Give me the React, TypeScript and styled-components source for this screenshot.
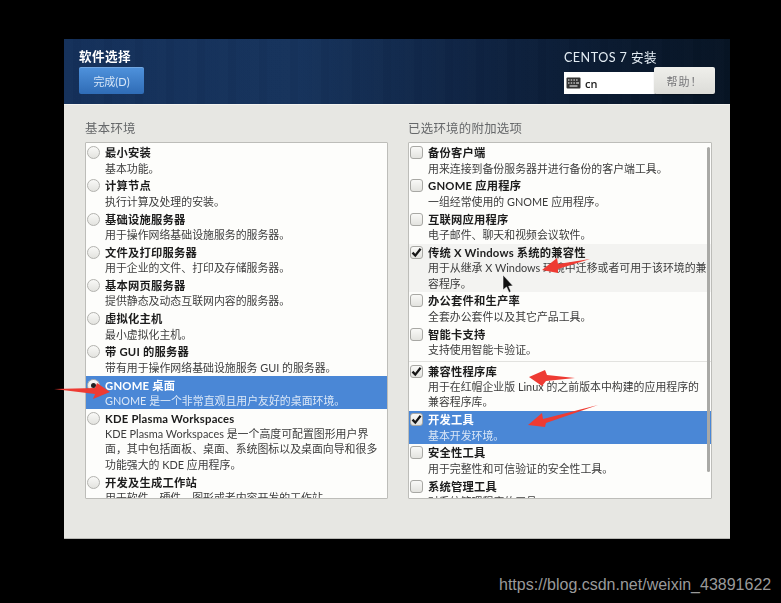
import React from "react";
import styled, { createGlobalStyle } from "styled-components";

const FONT = `Lato, "Noto Sans CJK SC", sans-serif`;
const Global = createGlobalStyle`
  html, body { margin: 0; padding: 0; background: #000; }
  body { width: 781px; height: 603px; overflow: hidden; font-family: ${FONT}; }
`;
const Page = styled.div`
  position: relative; width: 781px; height: 603px; background: #000; padding: 39px 51px 0 64px; box-sizing: border-box; overflow: hidden;
`;
const Soft = styled.div`filter: blur(0.45px);`;
const Win = styled.div`
  width: 666px; height: 500px; background: #e7e7e3; display: flex; flex-direction: column; border-bottom: 1px solid #b9b9b5; box-sizing: border-box;
`;
const Header = styled.header`
  height: 66px; flex: none; box-sizing: border-box; padding: 10px 15px 0 15px; display: flex; justify-content: space-between;
  color: #fff; border-bottom: 1px solid #f3f3f0;
  background:
    repeating-linear-gradient(90deg, rgba(255,255,255,.008) 0 9px, rgba(0,0,0,.018) 9px 17px, rgba(255,255,255,.004) 17px 31px),
    linear-gradient(90deg, #14305a 0%, #16335c 35%, #0f2444 60%, #0a1a30 82%, #071424 100%);
`;
const HLeft = styled.div`display: flex; flex-direction: column; gap: 2px;`;
const HRight = styled.div`display: flex; flex-direction: column; width: 151px;`;
const Title = styled.h1`margin: 0; font-size: 12.6px; line-height: 16px; font-weight: 700; letter-spacing: .4px;`;
const Done = styled.button`
  width: 65px; height: 27px; border: 0; padding: 0; border-radius: 2px; color: #d6e6f8; font: 400 11px ${FONT};
  background: linear-gradient(#4f92dc, #2f6cb6); box-shadow: inset 0 1px 0 rgba(255,255,255,.2);
`;
const Product = styled.div`font-size: 12.6px; line-height: 16px; color: #e4edf4; letter-spacing: .45px; margin-top: 1px;`;
const Controls = styled.div`display: flex; align-items: flex-end; height: 27px; margin-top: 1px;`;
const Kbd = styled.div`
  width: 91px; height: 22px; background: #fff; color: #222; display: flex; align-items: center; gap: 4px; padding-left: 2px; box-sizing: border-box; font: 600 11px "Open Sans", sans-serif;
`;
const Help = styled.button`
  width: 61px; height: 27px; margin-left: -1px; border: 0; border-radius: 2px; padding: 0; color: #77777a; letter-spacing: 1px;
  font: 400 11px ${FONT}; background: linear-gradient(#efefeb, #dcdcd8); box-shadow: 0 1px 1px rgba(0,0,0,.3);
`;
const Body = styled.main`display: grid; grid-template-columns: 303px 304px; column-gap: 20px; padding: 15px 0 0 21px;`;
const Col = styled.section`display: flex; flex-direction: column;`;
const Label = styled.h2`margin: 0 0 5px; font-size: 12.4px; line-height: 17px; font-weight: 400; color: #66686a; letter-spacing: .3px;`;
const List = styled.div`
  position: relative; height: 357px; box-sizing: border-box; background: #fdfdfb; border: 1px solid #bdbdb9; border-radius: 1px; overflow: hidden; padding-top: 1px;
`;
const Row = styled.div<{ $sel?: boolean; $hover?: boolean; $sep?: boolean }>`
  display: grid; grid-template-columns: 19px 1fr; padding: 1.3px 0 1.2px 0;
  background: ${(p) => (p.$sel ? "#4a87d6" : p.$hover ? "#f3f3f1" : "transparent")};
  color: ${(p) => (p.$sel ? "#fff" : "#1c1c1c")};
  ${(p) => p.$sep && "margin-top: 3px; border-top: 1px solid #e2e2df;"}
`;
const Mark = styled.span`
  width: 13px; height: 13px; margin: 1px 0 0 1px; box-sizing: border-box; border: 1px solid #b2b2ae; border-radius: 50%;
  background: linear-gradient(#f9f9f7, #e3e3df); display: flex; align-items: center; justify-content: center;
`;
const Box = styled(Mark)`border-radius: 3px; border-color: #a8a8a4; color: #222;`;
const Dot = styled.i`width: 5px; height: 5px; border-radius: 50%; background: #222;`;
const Txt = styled.div`min-width: 0;`;
const Name = styled.div`font-size: 11.3px; line-height: 15.35px; font-weight: 700; letter-spacing: .2px; white-space: nowrap;`;
const Desc = styled.div<{ $sel?: boolean }>`font-size: 10.9px; line-height: 15.35px; white-space: pre; color: ${(p) => (p.$sel ? "#d9e6f7" : "#3c3c3c")};`;
const Scroll = styled.div`position: absolute; right: 1px; top: 4px; width: 3px; height: 325px; background: #a9a9a6; border-radius: 2px;`;
const Overlay = styled.svg`position: absolute; left: 0; top: 0; pointer-events: none;`;
const Mark2 = styled.div`
  position: absolute; left: 499px; top: 575px; color: #9a9a9a; font: 400 16px "Liberation Sans", Arial, sans-serif; line-height: 19px; white-space: nowrap;
`;

type Item = { n: string; d: string; on?: boolean; sel?: boolean; hover?: boolean; sep?: boolean };
const env: Item[] = [
  { n: "最小安装", d: "基本功能。" },
  { n: "计算节点", d: "执行计算及处理的安装。" },
  { n: "基础设施服务器", d: "用于操作网络基础设施服务的服务器。" },
  { n: "文件及打印服务器", d: "用于企业的文件、打印及存储服务器。" },
  { n: "基本网页服务器", d: "提供静态及动态互联网内容的服务器。" },
  { n: "虚拟化主机", d: "最小虚拟化主机。" },
  { n: "带 GUI 的服务器", d: "带有用于操作网络基础设施服务 GUI 的服务器。" },
  { n: "GNOME 桌面", d: "GNOME 是一个非常直观且用户友好的桌面环境。", on: true, sel: true },
  { n: "KDE Plasma Workspaces", d: "KDE Plasma Workspaces 是一个高度可配置图形用户界\n面，其中包括面板、桌面、系统图标以及桌面向导和很多\n功能强大的 KDE 应用程序。" },
  { n: "开发及生成工作站", d: "用于软件、硬件、图形或者内容开发的工作站。" },
];
const addons: Item[] = [
  { n: "备份客户端", d: "用来连接到备份服务器并进行备份的客户端工具。" },
  { n: "GNOME 应用程序", d: "一组经常使用的 GNOME 应用程序。" },
  { n: "互联网应用程序", d: "电子邮件、聊天和视频会议软件。" },
  { n: "传统 X Windows 系统的兼容性", d: "用于从继承 X Windows 环境中迁移或者可用于该环境的兼\n容程序。", on: true, hover: true },
  { n: "办公套件和生产率", d: "全套办公套件以及其它产品工具。" },
  { n: "智能卡支持", d: "支持使用智能卡验证。" },
  { n: "兼容性程序库", d: "用于在红帽企业版 Linux 的之前版本中构建的应用程序的\n兼容程序库。", on: true, sep: true },
  { n: "开发工具", d: "基本开发环境。", on: true, sel: true },
  { n: "安全性工具", d: "用于完整性和可信验证的安全性工具。" },
  { n: "系统管理工具", d: "对系统管理程序的工具。" },
];

const Check = () => (
  <svg width="11" height="11" viewBox="0 0 11 11" fill="none">
    <path d="M1.5 5.6 4.3 8.6 9.6 1.8" stroke="#161616" strokeWidth="2.3" />
  </svg>
);
const KeyIcon = () => (
  <svg width="15" height="12" viewBox="0 0 15 12">
    <rect x=".5" y=".5" width="14" height="11" rx="1" fill="#333" />
    <path d="M2 3h1.5M4.700 3h1.500M7.400 3h1.500M10.100 3h1.500M2 6h1.500M4.700 6h1.500M7.400 6h1.500M10.100 6h2.900M3.500 9h8" stroke="#fff" strokeWidth="1.100" />
  </svg>
);

const Rows = ({ items, radio }: { items: Item[]; radio?: boolean }) => (
  <>
    {items.map((it) => (
      <Row key={it.n} $sel={it.sel} $hover={it.hover} $sep={it.sep}>
        {radio ? <Mark>{it.on && <Dot />}</Mark> : <Box>{it.on && <Check />}</Box>}
        <Txt>
          <Name>{it.n}</Name>
          <Desc $sel={it.sel}>{it.d}</Desc>
        </Txt>
      </Row>
    ))}
  </>
);

export default function App() {
  return (
    <Page>
      <Global />
      <Soft>
        <Win>
          <Header>
            <HLeft>
              <Title>软件选择</Title>
              <Done>完成(D)</Done>
            </HLeft>
            <HRight>
              <Product>CENTOS 7 安装</Product>
              <Controls>
                <Kbd><KeyIcon />cn</Kbd>
                <Help>帮助！</Help>
              </Controls>
            </HRight>
          </Header>
          <Body>
            <Col>
              <Label>基本环境</Label>
              <List><Rows items={env} radio /></List>
            </Col>
            <Col>
              <Label>已选环境的附加选项</Label>
              <List><Rows items={addons} /><Scroll /></List>
            </Col>
          </Body>
        </Win>
      </Soft>
      <Overlay width="781" height="603" viewBox="0 0 781 603">
        <g fill="#ee3b33">
          <path d="M54 389 95 388 97 383 110 392 93 399 95 394Z" />
          <path d="M590 259 558 264 557 258 542 270 558 273 558 269Z" />
          <path d="M575 378 547 375 545 370 529 377 542 386 546 381Z" />
          <path d="M598 405 543 419 542 413 528 425 545 427 546 423Z" />
        </g>
        <path d="M503 275V290L506.500 287 509 292.500 511 291.500 508.700 286.300 513 285.800Z" fill="#111" stroke="#fff" strokeWidth=".6" />
      </Overlay>
      <Mark2>https://blog.csdn.net/weixin_43891622</Mark2>
    </Page>
  );
}
